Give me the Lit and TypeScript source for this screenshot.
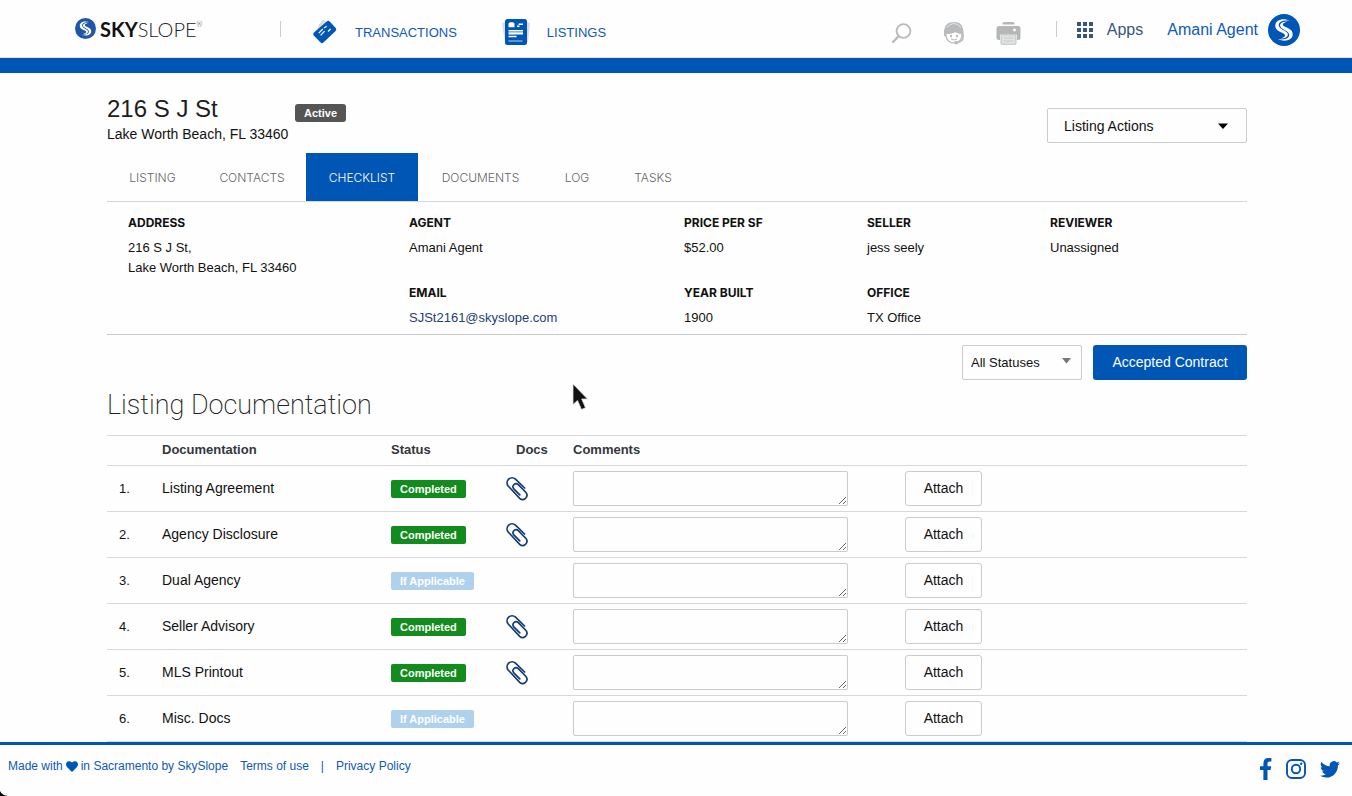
import { LitElement, html, css, svg, nothing } from "lit";
import { customElement, state } from "lit/decorators.js";

const swirl = svg`
  <circle cx="16" cy="16" r="16" fill="currentColor"></circle>
  <g fill="#fefefe">
    <path d="M22 7C16 3.500 7.500 5.500 7.300 11.500C7.200 16.300 11.500 17.500 15 19.200C18.600 21 17.500 23 12.500 24.500C18.500 24.800 21.500 21.500 19 18.600C16.600 16 11.200 15.200 10.800 11.300C10.500 7.500 16 5.800 22 7Z"></path>
    <path d="M10 25C16 28.500 24.500 26.500 24.700 20.500C24.800 15.700 20.500 14.500 17 12.800C13.400 11 14.500 9 19.500 7.500C13.500 7.200 10.500 10.500 13 13.400C15.400 16 20.800 16.800 21.200 20.700C21.500 24.500 16 26.200 10 25Z"></path>
  </g>`;

const icons = {
  transactions: html`<svg width="26" height="26" viewBox="0 0 26 26" aria-hidden="true">
    <path d="M6 7 10 1.500Q11 .8 12 1.200L15 3 6 12Z" fill="#dcdde0"></path>
    <path d="M14.700 2.400Q16.200 1 17.700 2.400L23.700 9Q24.900 10.500 23.600 12L11.400 23.600Q10 24.800 8.600 23.500L1.700 16.500Q.5 15 1.900 13.600Z" fill="#0056b5"></path>
    <path d="M6.800 14.200 10.800 10M12 8.900 14.700 7.200M8.600 16.400 12.600 12.200M16 12.500 18.600 10" stroke="#fefefe" stroke-width="1.200" fill="none"></path>
  </svg>`,
  listings: html`<svg width="28" height="28" viewBox="0 0 28 28" aria-hidden="true">
    <path d="M0 5 5 4V24L3 24ZM28 5 23 4V24L26 24Z" fill="#dcdde0"></path>
    <rect x="3" y="1" width="22" height="26" rx="2.500" fill="#0056b5"></rect>
    <path d="M6.500 5.500 8 4.300h3l1.500 1.200v3.800h-6Z" fill="#fefefe"></path>
    <path d="M16.500 6.200h4.500M15 8.200h2.500M6.500 12.800h14.500M6.500 15.800h14.500M6.500 18.500h8" stroke="#fefefe" stroke-width="1.400"></path>
    <path d="M6.500 14.300h14.500M6.500 23h14" stroke="#b9d0ea" stroke-width="1.200"></path>
  </svg>`,
  search: html`<svg width="20" height="20" viewBox="0 0 20 20" fill="none" stroke="#b9bbbc" aria-hidden="true">
    <circle cx="11.500" cy="8" r="6.900" stroke-width="1.900"></circle>
    <path d="M6.500 13.300 1 19" stroke-width="2.400" stroke-linecap="round"></path>
  </svg>`,
  support: html`<svg width="22" height="24" viewBox="0 0 22 24" aria-hidden="true">
    <path d="M1 12C1 4 5 1 11 1s9.500 3 9.500 11v3.500H1.500Q.5 15 1 12Z" fill="#b9bbbc"></path>
    <path d="M3.600 6.500Q11-1.500 18.200 6.500" fill="none" stroke="#e6e7e7" stroke-width="1"></path>
    <path d="M3 12.500Q9 12.500 12 10.500 15 12.500 19 12.500v2c0 4.700-4 7.500-8 7.500s-8-3-8-7.500Z" fill="#fefefe" stroke="#b9bbbc" stroke-width="1.200"></path>
    <circle cx="8" cy="15" r="1.200" fill="#b9bbbc"></circle><circle cx="14" cy="15" r="1.200" fill="#b9bbbc"></circle>
    <path d="M8 18Q11 20 14 18" fill="none" stroke="#b9bbbc"></path>
    <path d="M20 13v3.500q0 4-6 5" fill="none" stroke="#b9bbbc" stroke-width="1.500"></path>
    <ellipse cx="13.200" cy="21.700" rx="2.200" ry="1.600" fill="#b9bbbc"></ellipse>
  </svg>`,
  print: html`<svg width="25" height="24" viewBox="0 0 25 24" aria-hidden="true">
    <path d="M6.500 3.500V2.500Q6.500 1 8 1h9q1.500 0 1.500 1.500v1Z" fill="#b4b6b7"></path>
    <rect x=".5" y="5" width="24" height="14" rx="2.500" fill="#b4b6b7"></rect>
    <circle cx="18.500" cy="9" r="1.400" fill="#fefefe"></circle>
    <path d="M4.500 14h16v9q0 .8-.8.800H5.300q-.8 0-.8-.8Z" fill="#e2e3e3" stroke="#fefefe"></path>
    <rect x="5" y="14" width="15" height="9.300" rx="1" fill="none" stroke="#b4b6b7" stroke-width=".8"></rect>
    <path d="M7.500 17h10M7.500 20h10" stroke="#c8caca"></path>
  </svg>`,
  apps: html`<svg width="16" height="16" viewBox="0 0 16 16" fill="#38557c" aria-hidden="true">
    <path d="M0 0h4v4H0zM6 0h4v4H6zM12 0h4v4h-4zM0 6h4v4H0zM6 6h4v4H6zM12 6h4v4h-4zM0 12h4v4H0zM6 12h4v4H6zM12 12h4v4h-4z"></path>
  </svg>`,
  clip: html`<svg width="22" height="24" viewBox="0 0 22 24" fill="none" stroke="#173d73" stroke-width="1.700" stroke-linecap="round" aria-hidden="true">
    <path d="M18.600 11 9.500 2.200A5 5 0 0 0 2.200 9L13.700 21.300A4.300 4.300 0 0 0 20 15.500L12.300 7.600A3.100 3.100 0 0 0 7.600 11.600L13.800 17.800"></path>
  </svg>`,
  heart: html`<svg width="12" height="11" viewBox="0 0 12 11" fill="#0056b5" role="img" aria-label="love">
    <path d="M6 11 1 6C-.8 4 0 .6 2.700.2 4.300 0 5.500.8 6 1.700 6.500.8 7.700 0 9.300.2 12 .6 12.800 4 11 6Z"></path>
  </svg>`,
  facebook: html`<svg width="12" height="22" viewBox="0 0 12 22" fill="#0056b5" aria-hidden="true">
    <path d="M3.400 22V12H0V8.200h3.400V5.200C3.400 1.800 5.400 0 8.400 0c1.500 0 3 .2 3 .2v3.400H9.700c-1.700 0-2.200 1-2.200 2.100v2.500h3.700L10.600 12H7.500v10Z"></path>
  </svg>`,
  instagram: html`<svg width="20" height="20" viewBox="0 0 20 20" fill="none" stroke="#0056b5" stroke-width="1.900" aria-hidden="true">
    <rect x="1" y="1" width="18" height="18" rx="5"></rect><circle cx="10" cy="10" r="4.200"></circle>
    <circle cx="15.200" cy="4.800" r="1.200" fill="#0056b5" stroke="none"></circle>
  </svg>`,
  twitter: html`<svg width="20" height="17" viewBox="0 0 24 20" fill="#0056b5" aria-hidden="true">
    <path d="M24 2.400a9.800 9.800 0 0 1-2.800.8A5 5 0 0 0 23.300.5a10 10 0 0 1-3.100 1.200A4.900 4.900 0 0 0 11.800 6.200 14 14 0 0 1 1.700 1a4.900 4.900 0 0 0 1.500 6.600A4.900 4.900 0 0 1 1 7v.1a4.900 4.900 0 0 0 3.900 4.800 4.900 4.900 0 0 1-2.200.1 4.900 4.900 0 0 0 4.600 3.400A9.900 9.900 0 0 1 0 17.500a14 14 0 0 0 7.500 2.200c9.100 0 14-7.500 14-14v-.6A10 10 0 0 0 24 2.400Z"></path>
  </svg>`,
};

interface Field { label: string; lines: string[]; link?: boolean }
interface Doc { name: string; done: boolean }

const TABS = ["LISTING", "CONTACTS", "CHECKLIST", "DOCUMENTS", "LOG", "TASKS"];

const FIELDS: (Field | null)[] = [
  { label: "ADDRESS", lines: ["216 S J St,", "Lake Worth Beach, FL 33460"] },
  { label: "AGENT", lines: ["Amani Agent"] },
  { label: "PRICE PER SF", lines: ["$52.00"] },
  { label: "SELLER", lines: ["jess seely"] },
  { label: "REVIEWER", lines: ["Unassigned"] },
  null,
  { label: "EMAIL", lines: ["SJSt2161@skyslope.com"], link: true },
  { label: "YEAR BUILT", lines: ["1900"] },
  { label: "OFFICE", lines: ["TX Office"] },
];

const DOCS: Doc[] = [
  { name: "Listing Agreement", done: true },
  { name: "Agency Disclosure", done: true },
  { name: "Dual Agency", done: false },
  { name: "Seller Advisory", done: true },
  { name: "MLS Printout", done: true },
  { name: "Misc. Docs", done: false },
];

@customElement("site-header")
export class SiteHeader extends LitElement {
  static styles = css`
    :host { display: block; flex: none; }
    .bar { display: flex; align-items: center; height: 57px; padding: 0 52px 0 75px; border-bottom: 1px solid #e0e3e8; }
    .stripe { height: 15px; background: #0056b5; }
    a, button { color: #0f59b8; text-decoration: none; font: inherit; background: none; border: 0; padding: 0; cursor: pointer; }
    svg { display: block; }
    .logo { display: flex; align-items: center; gap: 4px; width: 205px; font: 300 20px/24px Lato, sans-serif; color: #222; }
    .logo svg { color: #1f56a8; }
    .logo b { font-weight: 700; color: #111; }
    .logo sup { font-size: 7px; line-height: 7px; align-self: flex-start; margin: 4px 0 0 -4px; }
    .word { display: block; }
    .sep { width: 1px; height: 16px; background: #c9ccd0; }
    .nav { display: flex; align-items: center; margin: 7px 0 0 31px; font-size: 13px; gap: 45px; }
    .nav a { display: flex; align-items: center; gap: 17px; }
    .tools { display: flex; align-items: center; gap: 31px; margin: 9px 35px 0 auto; }
    .apps { display: flex; align-items: center; gap: 14px; margin: 2px 0 0 20px; font-size: 16px; color: #38557c; }
    .user { display: flex; align-items: center; gap: 10px; margin: 2px 0 0 24px; font-size: 16px; }
    .user svg { color: #0056b5; }
  `;

  render() {
    return html`
      <header class="bar">
        <a class="logo" href="#home" aria-label="SkySlope">
          <svg width="21" height="21" viewBox="0 0 32 32" aria-hidden="true">${swirl}</svg>
          <span class="word"><b>SKY</b>SLOPE</span><sup>®</sup>
        </a>
        <span class="sep"></span>
        <nav class="nav">
          <a href="#transactions">${icons.transactions}<span>TRANSACTIONS</span></a>
          <a href="#listings">${icons.listings}<span>LISTINGS</span></a>
        </nav>
        <div class="tools">
          <button aria-label="Search">${icons.search}</button>
          <button aria-label="Support">${icons.support}</button>
          <button aria-label="Print">${icons.print}</button>
        </div>
        <span class="sep"></span>
        <button class="apps">${icons.apps}<span>Apps</span></button>
        <a class="user" href="#account"><span>Amani Agent</span>
          <svg width="32" height="32" viewBox="0 0 32 32" aria-hidden="true">${swirl}</svg></a>
      </header>
      <div class="stripe"></div>`;
  }
}

@customElement("listing-summary")
export class ListingSummary extends LitElement {
  static styles = css`
    :host { display: block; }
    .top { display: flex; align-items: flex-start; height: 80px; box-sizing: border-box; padding-top: 22px; }
    h1 { margin: 0; font-weight: 400; font-size: 24px; line-height: 28px; color: #1d1d1f; }
    .place { min-width: 184px; font-size: 14px; line-height: 20px; margin: 1px 0 0; }
    .badge { margin: 9px 0 0 4px; padding: 0 9px; font-weight: 700; font-size: 11px; line-height: 18px; border-radius: 3px; background: #555; color: #fefefe; }
    .actions { display: flex; align-items: center; justify-content: space-between; box-sizing: border-box; width: 200px; height: 35px; margin: 13px 0 0 auto; padding: 0 18px 0 16px; border: 1px solid #c9cbcd; border-radius: 2px; background: #fefefe; font: inherit; font-size: 14px; color: #111; }
    .tabs { display: grid; grid-template-columns: 91px 108px 112px 125px 68px 84px; height: 48px; border-bottom: 1px solid #d3d6dc; }
    .tab { box-sizing: border-box; height: 48px; padding-top: 1px; font: 300 12px/48px Inter, sans-serif; text-align: center; color: #62656a; text-decoration: none; }
    .tab.on { background: #0056b5; color: #fefefe; }
    dl { display: grid; grid-template-columns: 281fr 275fr 183fr 183fr 197fr; row-gap: 7px; margin: 0; padding: 13px 0 6px 21px; border-bottom: 1px solid #c6c9cd; font-size: 13px; line-height: 20px; }
    dt { font-size: 12px; font-weight: 700; line-height: 16px; font-family: Inter, sans-serif; margin-bottom: 7px; }
    dd { margin: 0; }
    dd a { color: #1d3f73; text-decoration: none; }
  `;

  render() {
    return html`
      <section class="top">
        <div><h1>216 S J St</h1><p class="place">Lake Worth Beach, FL 33460</p></div>
        <span class="badge">Active</span>
        <button class="actions">Listing Actions
          <svg width="10" height="6" viewBox="0 0 10 6" aria-hidden="true"><path d="M0 .5h10L5 6Z"></path></svg></button>
      </section>
      <nav class="tabs">
        ${TABS.map((t) => html`<a class="tab ${t === "CHECKLIST" ? "on" : ""}" href="#${t.toLowerCase()}">${t}</a>`)}
      </nav>
      <dl>
        ${FIELDS.map((f) => f === null ? html`<div></div>` : html`
          <div><dt>${f.label}</dt>
            ${f.lines.map((l) => html`<dd>${f.link ? html`<a href="mailto:${l}">${l}</a>` : l}</dd>`)}
          </div>`)}
      </dl>`;
  }
}

@customElement("document-checklist")
export class DocumentChecklist extends LitElement {
  @state() private docs = DOCS;

  static styles = css`
    :host { display: block; }
    .filters { display: flex; justify-content: flex-end; gap: 11px; margin-top: 10px; }
    .pick { display: grid; align-items: center; }
    .pick > * { grid-area: 1 / 1; }
    .pick svg { justify-self: end; margin: 0 11px 4px 0; pointer-events: none; }
    select { appearance: none; box-sizing: border-box; width: 120px; height: 35px; padding: 0 8px; border: 1px solid #c9cbcd; border-radius: 2px; background: #fefefe; color: #111; font: inherit; font-size: 13px; }
    .primary { height: 35px; width: 154px; padding: 0 0 1px; border: 0; border-radius: 3px; background: #0056b5; color: #fefefe; font: inherit; font-size: 14px; }
    h2 { margin: 9px 0 13px; font: 200 27px/33px Roboto, sans-serif; color: #222; }
    table { width: 100%; border-collapse: collapse; table-layout: fixed; font-size: 14px; }
    .c-num { width: 55px; } .c-name { width: 229px; } .c-status { width: 115px; } .c-docs { width: 67px; } .c-comment { width: 332px; }
    th, td { padding: 0; text-align: left; border-top: 1px solid #d6d8da; }
    th { height: 27px; padding-bottom: 2px; font-weight: 700; font-size: 13px; color: #33373d; }
    td { height: 45px; border-bottom: 1px solid #d6d8da; }
    th.docs { padding-left: 10px; }
    td.num { padding-left: 12px; font-size: 13px; }
    td.name { height: 43px; padding-bottom: 2px; }
    svg { display: block; }
    .tag { display: block; width: fit-content; padding: 0 9px; font-size: 11px; line-height: 18px; font-weight: 700; border-radius: 2px; color: #fefefe; background: #afd1ec; }
    .tag.done { background: #128c1c; }
    textarea { display: block; box-sizing: border-box; width: 275px; height: 35px; padding: 4px; border: 1px solid #c9cbcd; border-radius: 2px; background: #fefefe; font: inherit; }
    .attach { display: block; width: 77px; height: 35px; padding: 0 0 1px; border: 1px solid #c9cbcd; border-radius: 3px; background: #fefefe; color: #111; font: inherit; font-size: 14px; }
    .clip { display: block; padding: 0; border: 0; background: none; }
  `;

  render() {
    return html`
      <div class="filters">
        <div class="pick">
          <select aria-label="Status filter"><option>All Statuses</option><option>Completed</option><option>If Applicable</option></select>
          <svg width="9" height="6" viewBox="0 0 9 6" fill="#777" aria-hidden="true"><path d="M0 0h9L4.500 5.500Z"></path></svg>
        </div>
        <button class="primary">Accepted Contract</button>
      </div>
      <h2>Listing Documentation</h2>
      <table>
        <colgroup><col class="c-num"><col class="c-name"><col class="c-status"><col class="c-docs"><col class="c-comment"><col></colgroup>
        <thead><tr><th></th><th>Documentation</th><th>Status</th><th class="docs">Docs</th><th>Comments</th><th></th></tr></thead>
        <tbody>
          ${this.docs.map((d, i) => html`<tr>
            <td class="num">${i + 1}.</td>
            <td class="name">${d.name}</td>
            <td><span class="tag ${d.done ? "done" : ""}">${d.done ? "Completed" : "If Applicable"}</span></td>
            <td>${d.done ? html`<button class="clip" aria-label="Documents for ${d.name}">${icons.clip}</button>` : nothing}</td>
            <td><textarea aria-label="Comments on ${d.name}"></textarea></td>
            <td><button class="attach">Attach</button></td>
          </tr>`)}
        </tbody>
      </table>`;
  }
}

@customElement("site-footer")
export class SiteFooter extends LitElement {
  static styles = css`
    :host { display: block; flex: none; }
    footer { display: flex; align-items: flex-start; box-sizing: border-box; height: 54px; padding: 12px 12px 0 8px; border-top: 3px solid #0056b5; background: #fefefe; color: #0f59b8; font-size: 12px; line-height: 18px; }
    a { color: inherit; text-decoration: none; }
    .made { display: flex; align-items: center; gap: 3px; margin-right: 12px; }
    .links { display: flex; gap: 12px; }
    .social { display: flex; align-items: center; gap: 14px; margin: 1px 0 0 auto; }
    svg { display: block; }
  `;

  render() {
    return html`<footer>
      <span class="made">Made with ${icons.heart} in Sacramento by SkySlope</span>
      <span class="links"><a href="#terms">Terms of use</a><span>|</span><a href="#privacy">Privacy Policy</a></span>
      <span class="social">
        <a href="#facebook" aria-label="Facebook">${icons.facebook}</a>
        <a href="#instagram" aria-label="Instagram">${icons.instagram}</a>
        <a href="#twitter" aria-label="Twitter">${icons.twitter}</a>
      </span>
    </footer>`;
  }
}

@customElement("app-root")
export class AppRoot extends LitElement {
  static styles = css`
    :host { display: flex; flex-direction: column; height: 100vh; position: relative; overflow: hidden; background: #fefefe; color: #111; font-family: "Liberation Sans", Arial, sans-serif; }
    main { flex: 1; min-height: 0; overflow-y: auto; scrollbar-width: none; padding: 0 105px 0 107px; }
    .pointer { position: absolute; left: 572px; top: 383px; pointer-events: none; }
    .corner { position: absolute; left: 0; bottom: 0; }
  `;

  render() {
    return html`
      <site-header></site-header>
      <main>
        <listing-summary></listing-summary>
        <document-checklist></document-checklist>
      </main>
      <site-footer></site-footer>
      <svg class="pointer" width="18" height="28" viewBox="0 0 18 28" aria-hidden="true">
        <path d="M1 1V21.500L5.500 17.500 9.500 26.500 13.500 24.800 9.700 16H15.500Z" fill="#111" stroke="#ddd" stroke-width=".8"></path>
      </svg>
      <svg class="corner" width="8" height="5" viewBox="0 0 8 5" aria-hidden="true"><path d="M0 0Q2 4.500 8 5H0Z"></path></svg>`;
  }
}
